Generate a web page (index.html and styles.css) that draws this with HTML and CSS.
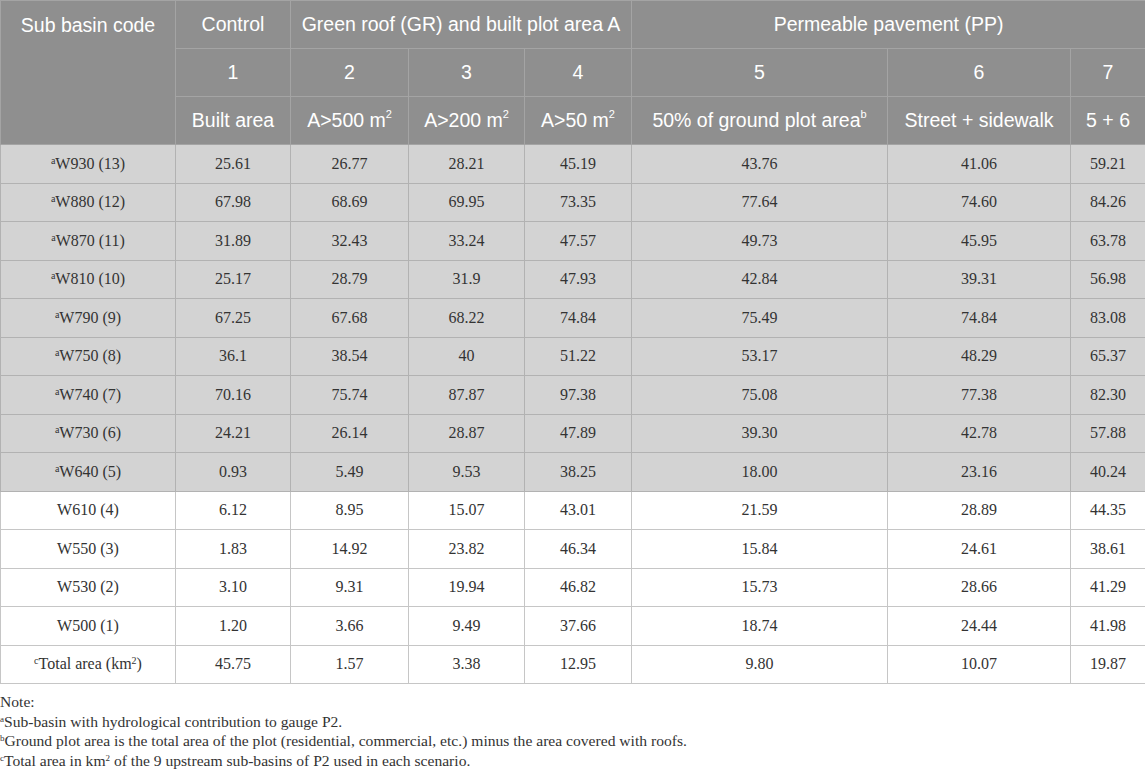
FILE: index.html
```html
<!DOCTYPE html>
<html lang="en">
<head>
  <meta charset="UTF-8" />
  <meta name="viewport" content="width=device-width, initial-scale=1.0"/>
  <title>Sub basin scenarios</title>
  <link rel="stylesheet" href="styles.css">
</head>
<body>

  <table class="data">
    <colgroup>
      <col class="c1"><col class="c2"><col class="c3"><col class="c4">
      <col class="c5"><col class="c6"><col class="c7"><col class="c8">
    </colgroup>
    <thead>
      <tr>
        <th rowspan="3" class="top">Sub basin code</th>
        <th>Control</th>
        <th colspan="3">Green roof (GR) and built plot area A</th>
        <th colspan="3">Permeable pavement (PP)</th>
      </tr>
      <tr>
        <th>1</th><th>2</th><th>3</th><th>4</th><th>5</th><th>6</th><th>7</th>
      </tr>
      <tr>
        <th>Built area</th>
        <th>A&gt;500 m<sup>2</sup></th>
        <th>A&gt;200 m<sup>2</sup></th>
        <th>A&gt;50 m<sup>2</sup></th>
        <th>50% of ground plot area<sup>b</sup></th>
        <th>Street + sidewalk</th>
        <th>5 + 6</th>
      </tr>
    </thead>
    <tbody>
      <tr class="up"><td><sup>a</sup>W930 (13)</td><td>25.61</td><td>26.77</td><td>28.21</td><td>45.19</td><td>43.76</td><td>41.06</td><td>59.21</td></tr>
      <tr class="up"><td><sup>a</sup>W880 (12)</td><td>67.98</td><td>68.69</td><td>69.95</td><td>73.35</td><td>77.64</td><td>74.60</td><td>84.26</td></tr>
      <tr class="up"><td><sup>a</sup>W870 (11)</td><td>31.89</td><td>32.43</td><td>33.24</td><td>47.57</td><td>49.73</td><td>45.95</td><td>63.78</td></tr>
      <tr class="up"><td><sup>a</sup>W810 (10)</td><td>25.17</td><td>28.79</td><td>31.9</td><td>47.93</td><td>42.84</td><td>39.31</td><td>56.98</td></tr>
      <tr class="up"><td><sup>a</sup>W790 (9)</td><td>67.25</td><td>67.68</td><td>68.22</td><td>74.84</td><td>75.49</td><td>74.84</td><td>83.08</td></tr>
      <tr class="up"><td><sup>a</sup>W750 (8)</td><td>36.1</td><td>38.54</td><td>40</td><td>51.22</td><td>53.17</td><td>48.29</td><td>65.37</td></tr>
      <tr class="up"><td><sup>a</sup>W740 (7)</td><td>70.16</td><td>75.74</td><td>87.87</td><td>97.38</td><td>75.08</td><td>77.38</td><td>82.30</td></tr>
      <tr class="up"><td><sup>a</sup>W730 (6)</td><td>24.21</td><td>26.14</td><td>28.87</td><td>47.89</td><td>39.30</td><td>42.78</td><td>57.88</td></tr>
      <tr class="up"><td><sup>a</sup>W640 (5)</td><td>0.93</td><td>5.49</td><td>9.53</td><td>38.25</td><td>18.00</td><td>23.16</td><td>40.24</td></tr>
      <tr><td>W610 (4)</td><td>6.12</td><td>8.95</td><td>15.07</td><td>43.01</td><td>21.59</td><td>28.89</td><td>44.35</td></tr>
      <tr><td>W550 (3)</td><td>1.83</td><td>14.92</td><td>23.82</td><td>46.34</td><td>15.84</td><td>24.61</td><td>38.61</td></tr>
      <tr><td>W530 (2)</td><td>3.10</td><td>9.31</td><td>19.94</td><td>46.82</td><td>15.73</td><td>28.66</td><td>41.29</td></tr>
      <tr><td>W500 (1)</td><td>1.20</td><td>3.66</td><td>9.49</td><td>37.66</td><td>18.74</td><td>24.44</td><td>41.98</td></tr>
      <tr><td><sup>c</sup>Total area (km<sup>2</sup>)</td><td>45.75</td><td>1.57</td><td>3.38</td><td>12.95</td><td>9.80</td><td>10.07</td><td>19.87</td></tr>
    </tbody>
  </table>

  <div class="notes">
    <p>Note:</p>
    <p><sup>a</sup>Sub-basin with hydrological contribution to gauge P2.</p>
    <p><sup>b</sup>Ground plot area is the total area of the plot (residential, commercial, etc.) minus the area covered with roofs.</p>
    <p><sup>c</sup>Total area in km<sup>2</sup> of the 9 upstream sub-basins of P2 used in each scenario.</p>
  </div>

</body>
</html>
```

FILE: styles.css
```css
body {
  margin: 0;
  background: #fff;
  color: #333;
  font-family: 'Liberation Serif', serif;
}

.data {
  width: 1145px;
  border-collapse: collapse;
  table-layout: fixed;
}

.c1 { width: 175px; }
.c2 { width: 115px; }
.c3 { width: 118px; }
.c4 { width: 116px; }
.c5 { width: 107px; }
.c6 { width: 256px; }
.c7 { width: 183px; }
.c8 { width: 75px; }

.data th {
  background: #8f8f8f;
  color: #fff;
  font-family: 'Liberation Sans', sans-serif;
  font-weight: normal;
  font-size: 19.5px;
  height: 47px;
  padding: 0;
  border: 1px solid #a4a4a4;
  white-space: nowrap;
}

.data th.top {
  vertical-align: top;
  padding-top: 13px;
}

.data th sup {
  font-size: 11px;
  vertical-align: 9px;
  line-height: 0;
}

.data td {
  height: 37.5px;
  padding: 0;
  text-align: center;
  font-size: 16px;
  border: 1px solid #c6c6c6;
}

.data tr.up td {
  background: #d3d3d3;
  border-color: #b2b2b2;
}

.data td sup {
  font-size: 10px;
  vertical-align: 5px;
  line-height: 0;
}

.notes {
  margin-top: 8px;
  font-size: 15.6px;
  color: #333;
}

.notes p {
  margin: 0;
  line-height: 19.6px;
}

.notes sup {
  font-size: 9px;
  vertical-align: 5px;
  line-height: 0;
}
```
